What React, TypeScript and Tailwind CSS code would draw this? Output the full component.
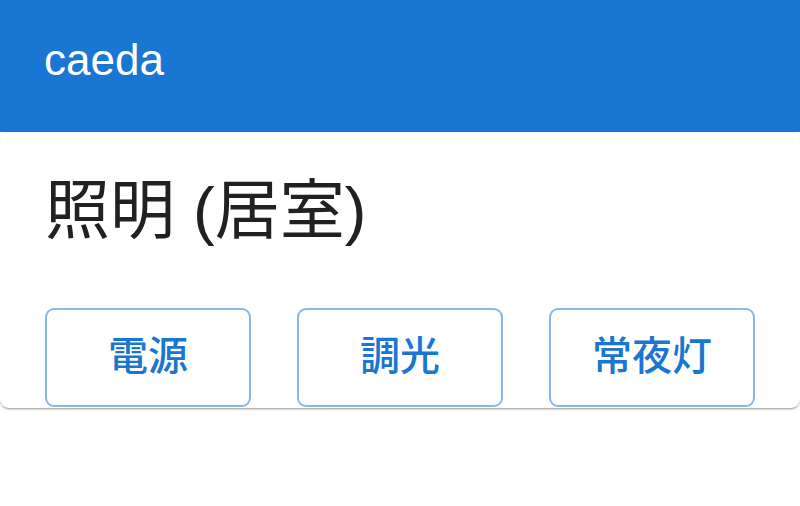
const font = { fontFamily: '"Liberation Sans", "Noto Sans CJK JP", sans-serif' };

function ModeButton({ label }: { label: string }) {
  return (
    <button className="h-[99px] flex-1 rounded-[9px] border-2 border-[#8ab8e6] bg-white text-[40px] font-medium text-[#1976d2] pb-1">
      {label}
    </button>
  );
}

export default function App() {
  return (
    <div className="w-[800px] h-[506px] bg-white" style={font}>
      <header className="h-[132px] bg-[#1976d2] px-11 pt-[34px]">
        <h1 className="text-[44px] leading-[52px] text-white">caeda</h1>
      </header>
      <div className="rounded-[9px] bg-white shadow-[0_2px_2px_-1px_rgba(0,0,0,0.3),0_1px_3px_0_rgba(0,0,0,0.15)] px-[45px] pt-[41px] pb-px">
        <h2 className="text-[65px] leading-[76px] text-[#212121]">照明 (居室)</h2>
        <div className="mt-[59px] flex gap-[46px]">
          <ModeButton label="電源" />
          <ModeButton label="調光" />
          <ModeButton label="常夜灯" />
        </div>
      </div>
    </div>
  );
}
